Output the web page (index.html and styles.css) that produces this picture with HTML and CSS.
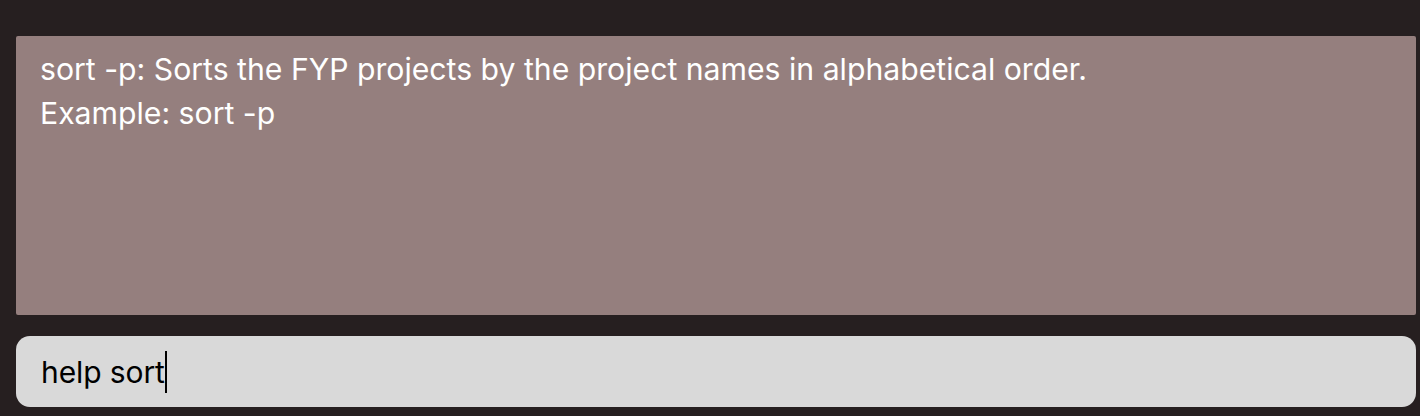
FILE: index.html
```html
<!DOCTYPE html>
<html>
<head>
<meta charset="utf-8">
<link rel="stylesheet" href="styles.css">
</head>
<body>
<div class="app">
  <div class="result">
    <div class="line">sort -p: Sorts the FYP projects by the project names in alphabetical order.</div>
    <div class="line">Example: sort -p</div>
  </div>
  <div class="command">
    <span class="cmd-text">help sort</span><span class="caret"></span>
  </div>
</div>
</body>
</html>
```
FILE: styles.css
```css
html, body {
  margin: 0;
  padding: 0;
  background: #261f20;
  width: 1420px;
  height: 416px;
  overflow: hidden;
}
.app {
  display: flex;
  flex-direction: column;
  padding: 36px 4px 0 16px;
  gap: 21px;
  font-family: "Inter", "Liberation Sans", sans-serif;
}
.result {
  height: 279px;
  background: #957f7e;
  border-radius: 2px;
  padding: 12px 24px;
  box-sizing: border-box;
  color: #ffffff;
  font-size: 30.2px;
  line-height: 43.5px;
  letter-spacing: 0;
}
.command {
  height: 71px;
  background: #d9d9d9;
  border-radius: 14px;
  display: flex;
  align-items: center;
  padding-left: 25px;
  color: #000000;
  font-size: 30px;
  letter-spacing: -0.1px;
}
.caret {
  display: inline-block;
  width: 2px;
  height: 42px;
  background: #000;
  margin-left: 0;
}
```
